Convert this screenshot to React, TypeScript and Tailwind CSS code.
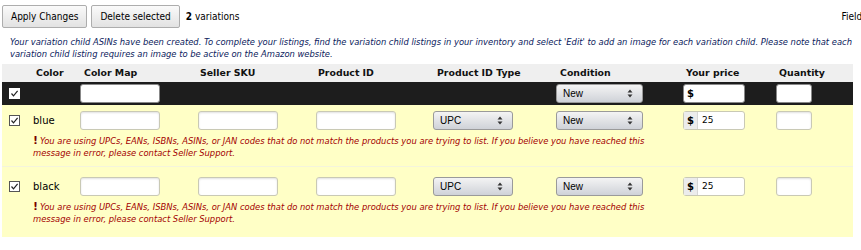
import React from "react";

const font = "font-['DejaVu_Sans',Verdana,sans-serif]";

function Check({ dark }: { dark?: boolean }) {
  return (
    <svg width="11" height="11" viewBox="0 0 11 11" className="block">
      <rect x="0.5" y="0.5" width="10" height="10" fill="#fff" stroke={dark ? "#fff" : "#555"} />
      <path d="M2.5 5.5 L4.5 7.8 L8.6 2.8" fill="none" stroke="#222" strokeWidth="1.2" />
    </svg>
  );
}

function TextBox({ w, dark }: { w: string; dark?: boolean }) {
  return (
    <div
      className={`${w} h-[19px] bg-white rounded-[3px] border ${
        dark ? "border-[#888]" : "border-[#c9c9b5] shadow-[inset_0_1px_2px_rgba(0,0,0,0.12)]"
      }`}
    />
  );
}

function Arrows() {
  return (
    <svg width="6" height="9" viewBox="0 0 6 9" className="block">
      <path d="M3 0.5 L5.5 3.5 L0.5 3.5 Z" fill="#333" />
      <path d="M3 8.5 L5.5 5.5 L0.5 5.5 Z" fill="#333" />
    </svg>
  );
}

function SelectBox({ label, w }: { label: string; w: string }) {
  return (
    <div
      className={`${w} h-[19px] flex items-center justify-between pl-[6px] pr-[9px] rounded-[3px] border border-[#9a9a9a] bg-gradient-to-b from-[#f4f4f4] to-[#cfd2d8] text-[10px] text-black font-['Liberation_Sans',Arial,sans-serif]`}
    >
      <span>{label}</span>
      <Arrows />
    </div>
  );
}

function PriceBox({ value, dark }: { value?: string; dark?: boolean }) {
  return (
    <div
      className={`w-[62px] h-[19px] flex items-center rounded-[3px] border bg-white ${
        dark ? "border-[#888]" : "border-[#c9c9b5]"
      }`}
    >
      <span
        className={`h-full flex items-center px-[3px] text-[10px] font-bold text-black ${
          dark ? "" : "bg-[#ececec] border-r border-[#d6d6d6]"
        }`}
      >
        $
      </span>
      <span className="pl-[4px] text-[9px] text-black">{value}</span>
    </div>
  );
}

const W = ["w-[28px]", "w-[47px]", "w-[118px]", "w-[118px]", "w-[117px]", "w-[123px]", "w-[127px]", "w-[93px]", "w-[80px]"];

function Header() {
  const labels = ["", "Color", "Color Map", "Seller SKU", "Product ID", "Product ID Type", "Condition", "Your price", "Quantity"];
  const pads = ["", "pl-[6px]", "pl-[7px]", "pl-[5px]", "pl-[5px]", "pl-[7px]", "pl-[7px]", "pl-[6px]", "pl-[6px]"];
  return (
    <div className="flex h-[18px] items-center bg-[#efefef] text-[9.4px] font-bold text-[#111]">
      {labels.map((l, i) => (
        <div key={i} className={`${W[i]} ${pads[i]} shrink-0`}>
          {l}
        </div>
      ))}
    </div>
  );
}

function BlackRow() {
  return (
    <div className="flex h-[23px] items-center bg-[#1d1d1d]">
      <div className={`${W[0]} pl-[7px] shrink-0`}>
        <Check dark />
      </div>
      <div className={`${W[1]} shrink-0`} />
      <div className={`${W[2]} pl-[3px] shrink-0`}>
        <TextBox w="w-[80px]" dark />
      </div>
      <div className={`${W[3]} shrink-0`} />
      <div className={`${W[4]} shrink-0`} />
      <div className={`${W[5]} shrink-0`} />
      <div className={`${W[6]} pl-[3px] shrink-0`}>
        <SelectBox label="New" w="w-[87px]" />
      </div>
      <div className={`${W[7]} pl-[3px] shrink-0`}>
        <PriceBox dark />
      </div>
      <div className={`${W[8]} pl-[3px] shrink-0`}>
        <TextBox w="w-[36px]" dark />
      </div>
    </div>
  );
}

function VariationRow({ color, top }: { color: string; top: string }) {
  return (
    <div className={`bg-[#ffffc6] ${top}`}>
      <div className="flex items-center h-[19px]">
        <div className={`${W[0]} pl-[7px] shrink-0`}>
          <Check />
        </div>
        <div className={`${W[1]} pl-[3px] shrink-0 text-[10px] text-black`}>{color}</div>
        <div className={`${W[2]} pl-[3px] shrink-0`}>
          <TextBox w="w-[80px]" />
        </div>
        <div className={`${W[3]} pl-[3px] shrink-0`}>
          <TextBox w="w-[80px]" />
        </div>
        <div className={`${W[4]} pl-[3px] shrink-0`}>
          <TextBox w="w-[80px]" />
        </div>
        <div className={`${W[5]} pl-[3px] shrink-0`}>
          <SelectBox label="UPC" w="w-[80px]" />
        </div>
        <div className={`${W[6]} pl-[3px] shrink-0`}>
          <SelectBox label="New" w="w-[87px]" />
        </div>
        <div className={`${W[7]} pl-[3px] shrink-0`}>
          <PriceBox value="25" />
        </div>
        <div className={`${W[8]} pl-[3px] shrink-0`}>
          <TextBox w="w-[36px]" />
        </div>
      </div>
      <div className="pl-[31px] pt-[5px] text-[8.4px] leading-[12px] italic text-[#a30000] whitespace-nowrap">
        <div>
          <span className="not-italic font-bold text-[11px] text-[#7a0000] mr-[2px]">!</span>
          You are using UPCs, EANs, ISBNs, ASINs, or JAN codes that do not match the products you are trying to list. If you believe you have reached this
        </div>
        <div>message in error, please contact Seller Support.</div>
      </div>
    </div>
  );
}

export default function App() {
  return (
    <div className={`w-[861px] h-[250px] overflow-hidden bg-white ${font}`}>
      <div className="flex items-center pt-[5px] pl-[2px] pr-0 font-['DejaVu_Sans_Condensed','DejaVu_Sans',sans-serif]">
        <button className="h-[23px] px-[8px] rounded-[2px] border border-[#adadad] bg-gradient-to-b from-[#fafafa] to-[#e2e2e2] text-[10px] text-black">
          Apply Changes
        </button>
        <button className="ml-[4px] h-[23px] px-[8px] rounded-[2px] border border-[#adadad] bg-gradient-to-b from-[#fafafa] to-[#e2e2e2] text-[10px] text-black">
          Delete selected
        </button>
        <span className="ml-[6px] text-[10px] text-black">
          <b>2</b> variations
        </span>
        <span className="ml-auto mr-[-6px] text-[10px] text-black whitespace-nowrap">Fields</span>
      </div>
      <div className="pl-[10px] pt-[8px] text-[8.4px] leading-[12px] italic text-[#0a1a5c] whitespace-nowrap">
        <div>
          Your variation child ASINs have been created. To complete your listings, find the variation child listings in your inventory and select 'Edit' to add an image for each variation child. Please note that each
        </div>
        <div>variation child listing requires an image to be active on the Amazon website.</div>
      </div>
      <div className="ml-[2px] mt-[4px] w-[851px]">
        <Header />
        <BlackRow />
        <VariationRow color="blue" top="pt-[6px] pb-[7px]" />
        <div className="h-px bg-[#f4f4dc]" />
        <VariationRow color="black" top="pt-[10px] pb-[12px]" />
      </div>
    </div>
  );
}
